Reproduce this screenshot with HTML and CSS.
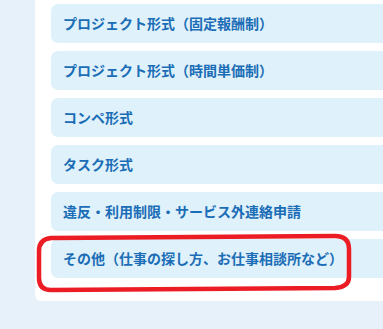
FILE: index.html
```html
<!DOCTYPE html>
<html lang="ja">
<head>
<meta charset="utf-8">
<link rel="stylesheet" href="styles.css">
</head>
<body>
<div class="page">
  <div class="panel">
    <ul class="list">
      <li class="item">プロジェクト形式（固定報酬制）</li>
      <li class="item">プロジェクト形式（時間単価制）</li>
      <li class="item">コンペ形式</li>
      <li class="item">タスク形式</li>
      <li class="item">違反・利用制限・サービス外連絡申請</li>
      <li class="item highlighted">その他（仕事の探し方、お仕事相談所など）
        <svg class="mark" width="324" height="62" viewBox="0 0 324 62">
          <path d="M16 5 L300 3 Q314 3 314 16 L314 44 Q314 54 300 55 L16 57 Q4 57 4 45 L4 18 Q4 6 16 5 Z" fill="none" stroke="#ec1c24" stroke-width="4.5"/>
        </svg>
      </li>
    </ul>
  </div>
</div>
</body>
</html>
```
FILE: styles.css
```css
html, body {
  margin: 0;
  padding: 0;
  background: #e6f1fa;
  overflow: hidden;
}
.page {
  width: 383px;
  height: 329px;
  overflow: hidden;
}
.panel {
  background: #ffffff;
  margin-left: 35px;
  width: 400px;
  padding: 4px 0 23px 16px;
  border-bottom-left-radius: 6px;
}
.list {
  list-style: none;
  margin: 0;
  padding: 0;
  display: flex;
  flex-direction: column;
  gap: 8px;
}
.item {
  position: relative;
  height: 39px;
  display: flex;
  align-items: center;
  padding: 0 12px;
  padding-bottom: 1px;
  box-sizing: border-box;
  background: #dff1fa;
  border-radius: 7px;
  font-family: "Noto Sans CJK JP", "Noto Sans", sans-serif;
  font-size: 14px;
  font-weight: 700;
  color: #1a6db6;
  white-space: nowrap;
}
.mark {
  position: absolute;
  left: -16px;
  top: -6px;
}
```
